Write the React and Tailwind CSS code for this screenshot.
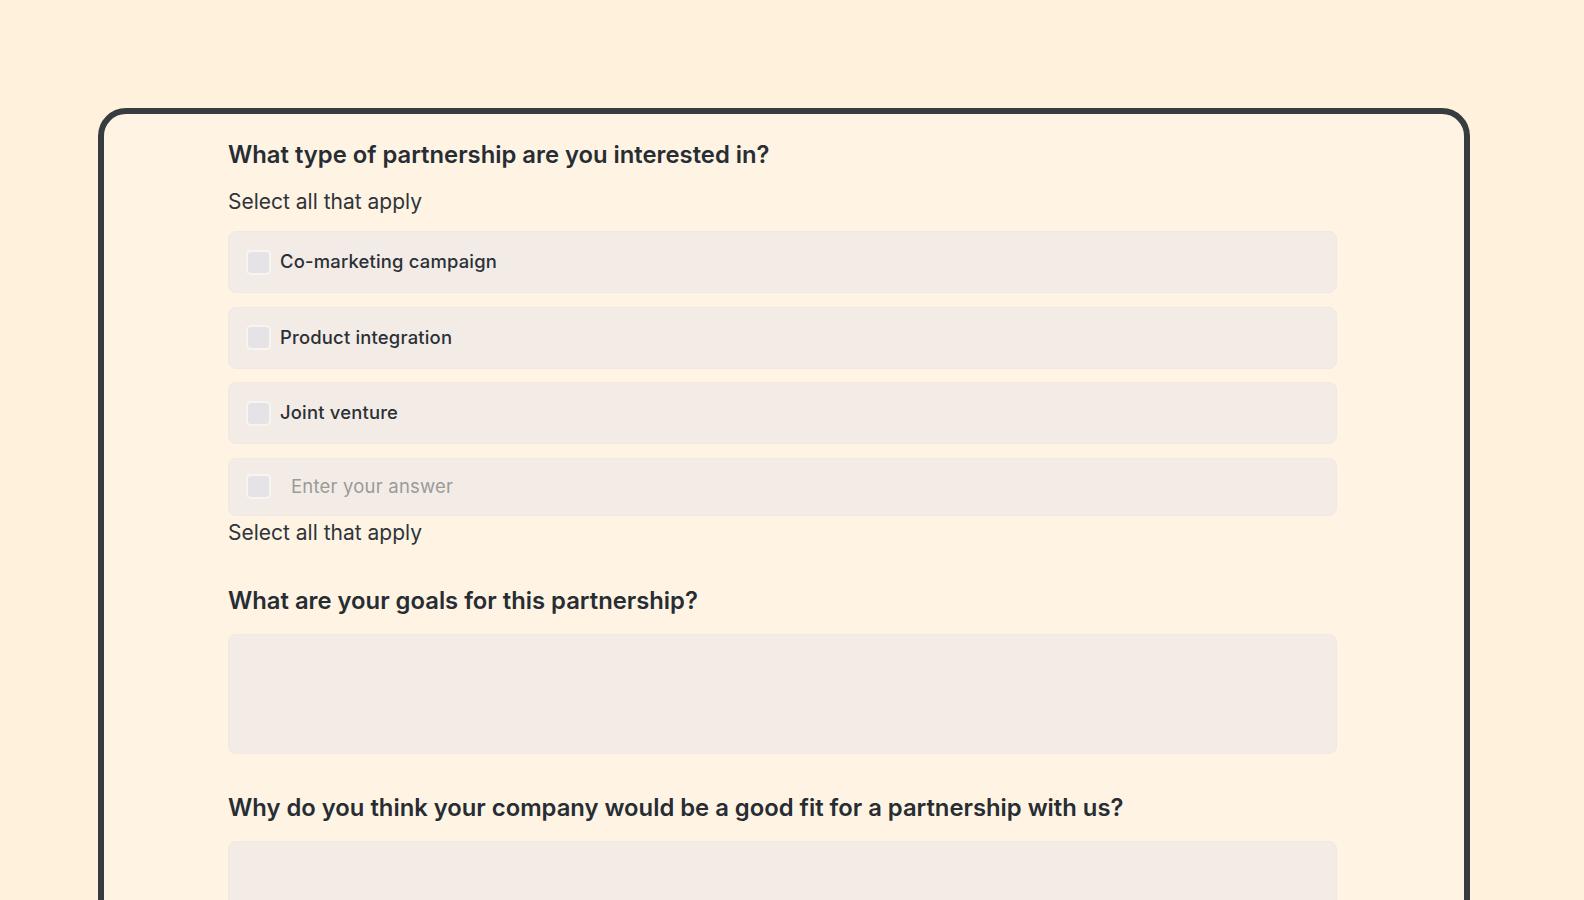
import React from 'react';

const font = { fontFamily: 'Inter, "Noto Sans", sans-serif' };

const Checkbox = () => (
  <div className="w-[25px] h-[25px] flex-shrink-0 rounded-[5px] bg-[#e6e3e7] border-2 border-[#f8f4f1]"></div>
);

const OptionRow = ({ label }) => (
  <div className="h-[62px] flex items-center pl-[17px] pr-4 rounded-lg bg-[#f3ece6] border border-[#f1e8e1]">
    <Checkbox />
    <span className="ml-[9px] text-[18.4px] font-medium text-[#2a3037] tracking-[0.2px]">{label}</span>
  </div>
);

const App = () => {
  const options = ['Co-marketing campaign', 'Product integration', 'Joint venture'];

  return (
    <div className="h-[900px] overflow-hidden bg-[#fff1dc] pt-[108px] pl-[98px]" style={font}>
      <div className="w-[1372px] h-[860px] rounded-[28px] border-[6px] border-[#373c41] bg-[#fff4e3] pt-[27px] pl-[124px] pr-[127px]">
        {/* Question 1 */}
        <h2 className="text-[23.8px] leading-[28px] font-semibold text-[#272d33]">
          What type of partnership are you interested in?
        </h2>
        <p className="mt-[19px] text-[21px] leading-[28px] text-[#2f343a]">Select all that apply</p>

        <div className="mt-[15px] flex flex-col gap-[13.5px]">
          {options.map((o, i) => (
            <OptionRow key={i} label={o} />
          ))}
          <div className="h-[58px] flex items-center pl-[17px] pr-4 rounded-lg bg-[#f3ece6] border border-[#f1e8e1]">
            <Checkbox />
            <span className="ml-[20px] text-[18.5px] text-[#9b9a99] tracking-[0.2px]">Enter your answer</span>
          </div>
        </div>
        <p className="mt-[3px] text-[21px] leading-[28px] text-[#2f343a]">Select all that apply</p>

        {/* Question 2 */}
        <h2 className="mt-[40px] text-[23.8px] leading-[28px] font-semibold text-[#272d33]">
          What are your goals for this partnership?
        </h2>
        <div className="mt-[19px] h-[120px] rounded-lg bg-[#f3ece6] border border-[#f1e8e1]"></div>

        {/* Question 3 */}
        <h2 className="mt-[40px] text-[23.8px] leading-[28px] font-semibold text-[#272d33]">
          Why do you think your company would be a good fit for a partnership with us?
        </h2>
        <div className="mt-[19px] h-[120px] rounded-lg bg-[#f3ece6] border border-[#f1e8e1]"></div>
      </div>
    </div>
  );
};

export default App;
